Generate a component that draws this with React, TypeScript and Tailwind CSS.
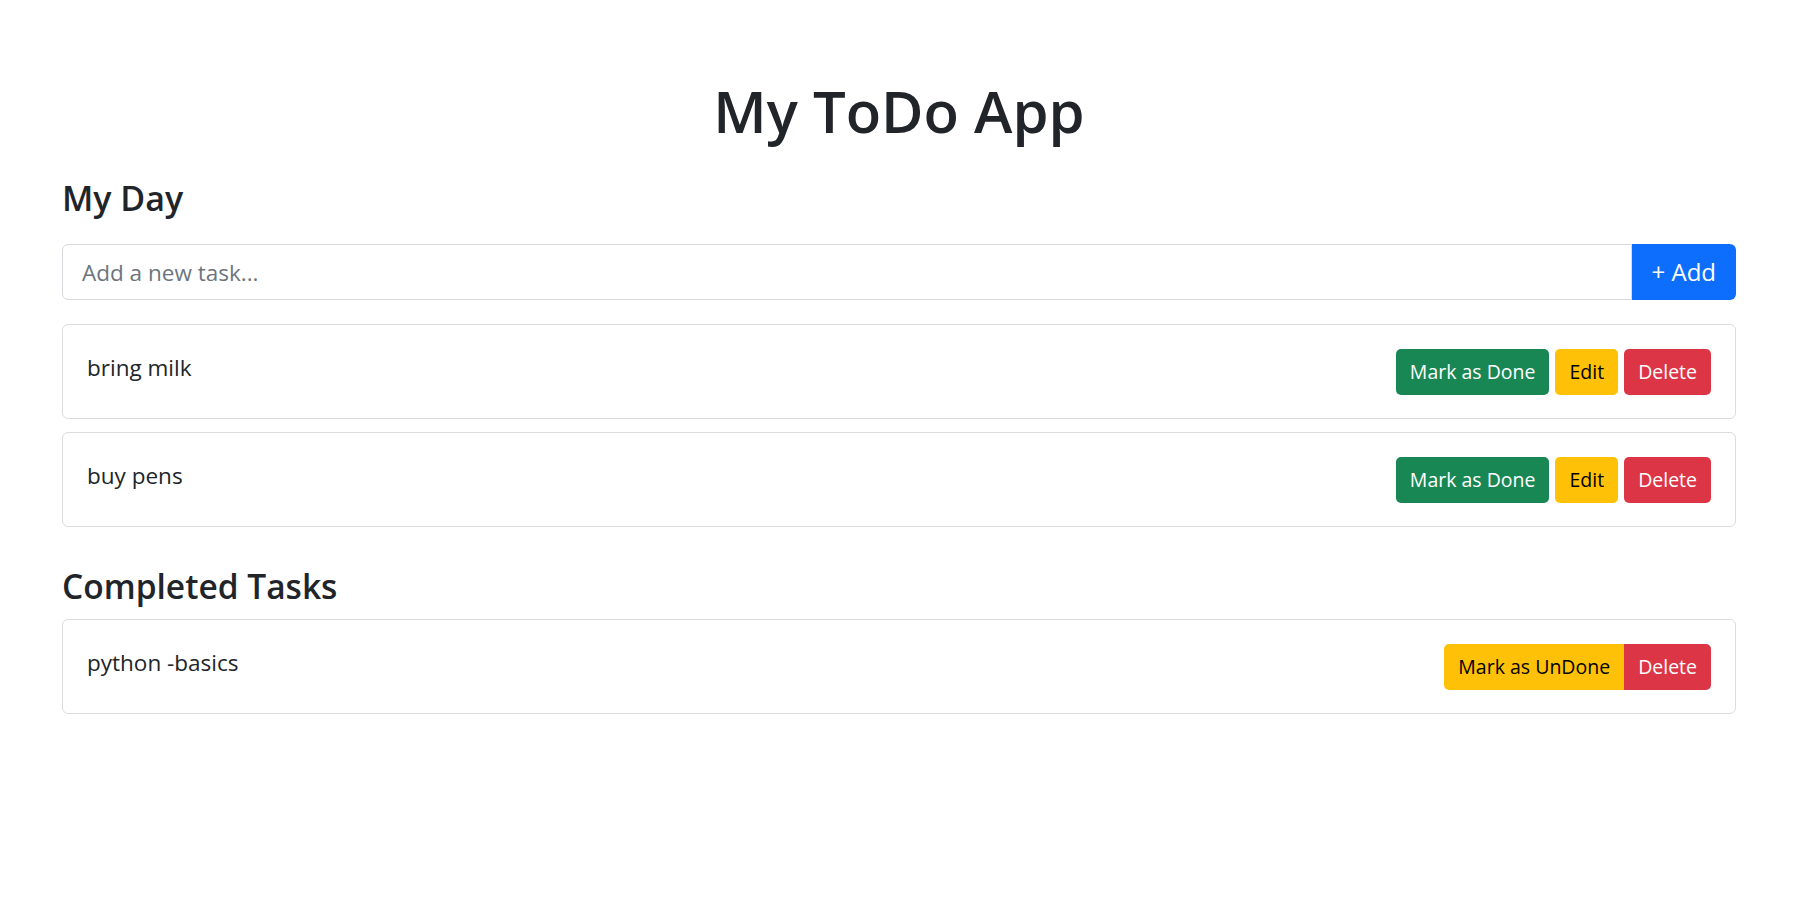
import { useState } from "react";

type Task = { id: number; text: string };

const font = { fontFamily: '"Open Sans", "Noto Sans", Arial, sans-serif' };

function TaskCard({ text, children }: { text: string; children: React.ReactNode }) {
  return (
    <div className="flex items-start justify-between rounded-[6px] border border-[#dcdcdc] bg-white px-6 pt-6 pb-[23px]">
      <span className="pt-[1px] text-[22.5px] leading-[36px] text-[#212529]">{text}</span>
      <div className="flex">{children}</div>
    </div>
  );
}

export default function App() {
  const [todos] = useState<Task[]>([
    { id: 1, text: "bring milk" },
    { id: 2, text: "buy pens" },
  ]);
  const [done] = useState<Task[]>([{ id: 3, text: "python -basics" }]);
  const [value, setValue] = useState("");

  return (
    <div className="min-h-screen bg-white text-[#212529]" style={font}>
      <div className="ml-[62px] mr-[63px] pt-[77px]">
        <h1 className="text-center text-[58px] font-semibold leading-[68px]">My ToDo App</h1>

        <h2 className="mt-[33px] text-[34px] font-semibold leading-[41px]">My Day</h2>

        <div className="mt-[25px] flex h-[56px]">
          <input
            value={value}
            onChange={(e) => setValue(e.target.value)}
            placeholder="Add a new task..."
            className="h-full flex-1 rounded-l-[6px] border border-[#d6d9dd] px-[19px] text-[22.5px] text-[#212529] outline-none placeholder:text-[#6c757d]"
          />
          <button className="h-full rounded-r-[6px] bg-[#0d6efd] px-[20px] text-[24px] text-white">+ Add</button>
        </div>

        <div className="mt-6 flex flex-col gap-[13px]">
          {todos.map((t) => (
            <TaskCard key={t.id} text={t.text}>
              <button className="mr-[6px] h-[46px] rounded-[5px] bg-[#198754] px-[14px] text-[19.5px] text-white">
                Mark as Done
              </button>
              <button className="mr-[6px] h-[46px] rounded-[5px] bg-[#ffc107] px-[14px] text-[19.5px] text-black">
                Edit
              </button>
              <button className="h-[46px] rounded-[5px] bg-[#dc3545] px-[14px] text-[19.5px] text-white">
                Delete
              </button>
            </TaskCard>
          ))}
        </div>

        <h2 className="mt-[39px] text-[33.5px] font-semibold leading-[41px]">Completed Tasks</h2>

        <div className="mt-[12px] flex flex-col gap-[13px]">
          {done.map((t) => (
            <TaskCard key={t.id} text={t.text}>
              <button className="h-[46px] rounded-l-[5px] bg-[#ffc107] px-[14px] text-[19.5px] text-black">
                Mark as UnDone
              </button>
              <button className="h-[46px] rounded-r-[5px] bg-[#dc3545] px-[14px] text-[19.5px] text-white">
                Delete
              </button>
            </TaskCard>
          ))}
        </div>
      </div>
    </div>
  );
}
